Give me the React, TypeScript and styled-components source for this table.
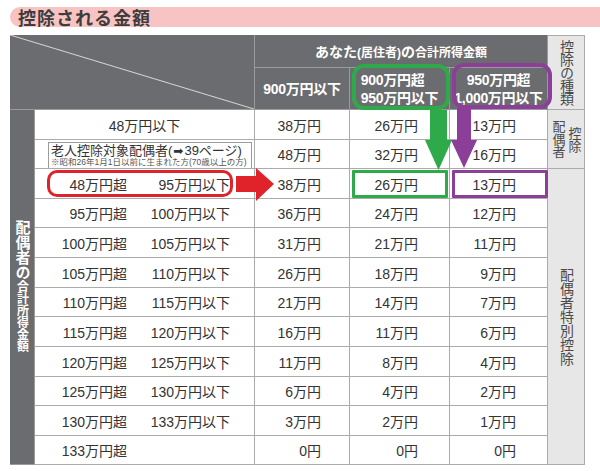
import React from "react";
import styled, { createGlobalStyle, css } from "styled-components";

const GlobalStyle = createGlobalStyle`
  html, body { margin: 0; padding: 0; background: #ffffff; }
  body {
    font-family: "Liberation Sans", "Noto Sans CJK JP", "DejaVu Sans", sans-serif;
    color: #333333;
  }
`;

const DARK = "#6b6c6f";
const LINE = "#ababab";
const LIGHT = "#e7e7e7";

const Page = styled.div`
  width: 600px;
  height: 471px;
  overflow: hidden;
  box-sizing: border-box;
  padding: 7px 0 0 10px;
  display: flex;
  flex-direction: column;
  gap: 8px;
`;

const TitleBar = styled.h1`
  margin: 0;
  height: 20px;
  background: #f8c3c3;
  border-radius: 10px 0 0 10px;
  display: flex;
  align-items: center;
  padding-left: 8px;
  font-family: "Noto Sans CJK JP", sans-serif;
  font-size: 18px;
  font-weight: 700;
  letter-spacing: 1px;
  line-height: 1;
  color: #3d3d3d;
`;

const TableWrap = styled.div`
  position: relative;
  width: 575px;
`;

const Grid = styled.div`
  display: grid;
  grid-template-columns: 25px 220px 95px 100px 98px 37px;
  grid-template-rows: 33px 42px 30px 29px 30px 29px 30px 30px 29px 30px 30px 29px 30px 29px;
`;

const cellBase = css`
  box-sizing: border-box;
  border-right: 1px solid ${LINE};
  border-bottom: 1px solid ${LINE};
  display: flex;
  align-items: center;
  min-width: 0;
`;

const DiagonalCell = styled.div`
  ${cellBase};
  grid-column: 1 / 3;
  grid-row: 1 / 3;
  background: ${DARK};
  border-color: #9a9a9a;
  position: relative;
`;

const DiagonalSvg = styled.svg`
  position: absolute;
  inset: 0;
  width: 100%;
  height: 100%;
`;

const IncomeHead = styled.div`
  ${cellBase};
  grid-column: 3 / 6;
  background: ${DARK};
  border-color: #9a9a9a;
  justify-content: center;
  color: #ffffff;
  font-weight: 700;
  white-space: nowrap;
`;

const Big = styled.span`
  font-size: 14px;
`;

const Small = styled.span`
  font-size: 12px;
`;

const BracketHead = styled.div<{ $align: "left" | "center" }>`
  ${cellBase};
  background: ${DARK};
  border-color: #9a9a9a;
  justify-content: center;
  color: #ffffff;
  font-weight: 700;
  font-size: 14px;
  line-height: 18px;
  letter-spacing: -0.3px;
  text-align: ${(p) => p.$align};
  white-space: nowrap;
`;

const KindHead = styled.div`
  ${cellBase};
  grid-column: 6;
  grid-row: 1 / 3;
  background: ${LIGHT};
  border-top: 1px solid ${LINE};
  justify-content: center;
  color: #4a4a4a;
`;

const Vertical = styled.span<{ $size: number; $spacing?: number; $bold?: boolean }>`
  writing-mode: vertical-rl;
  text-orientation: upright;
  font-size: ${(p) => p.$size}px;
  letter-spacing: ${(p) => p.$spacing ?? 0}px;
  line-height: 1;
  font-weight: ${(p) => (p.$bold ? 700 : 400)};
  white-space: nowrap;
`;

const LeftBand = styled.div`
  ${cellBase};
  grid-column: 1;
  grid-row: 3 / 15;
  background: ${DARK};
  border-color: #9a9a9a;
  justify-content: center;
  color: #ffffff;
  padding-bottom: 2px;
`;

const LabelCell = styled.div<{ $center?: boolean }>`
  ${cellBase};
  justify-content: ${(p) => (p.$center ? "center" : "flex-start")};
  font-size: 14px;
  color: #333333;
  white-space: nowrap;
`;

const Range = styled.div`
  display: grid;
  grid-template-columns: 92px 103px;
  text-align: right;
`;

const NoteCell = styled.div`
  ${cellBase};
  align-items: stretch;
  padding: 2px 2px 0 13px;
`;

const NoteBox = styled.div`
  flex: 1;
  border: 1px solid #9c9c9c;
  border-bottom: none;
  display: flex;
  flex-direction: column;
  justify-content: flex-start;
  padding-left: 2px;
  white-space: nowrap;
  overflow: hidden;
`;

const NoteMain = styled.div`
  font-size: 13px;
  line-height: 15px;
  height: 15px;
  color: #333333;
`;

const Arrow = styled.span`
  font-family: "DejaVu Sans", sans-serif;
  font-size: 12px;
  line-height: 1;
  margin: 0 1px;
`;

const NoteSub = styled.div`
  font-size: 8.5px;
  line-height: 9px;
  height: 9px;
  color: #555555;
`;

const ValueCell = styled.div<{ $pad: number }>`
  ${cellBase};
  justify-content: flex-end;
  padding-right: ${(p) => p.$pad}px;
  font-size: 14px;
  color: #333333;
  white-space: nowrap;
`;

const SideCell = styled.div<{ $rows: string }>`
  ${cellBase};
  grid-column: 6;
  grid-row: ${(p) => p.$rows};
  background: ${LIGHT};
  justify-content: center;
  gap: 3px;
  color: #4a4a4a;
`;

const Frame = styled.div<{ $x: number; $y: number; $w: number; $h: number; $color: string; $t: number; $r: number }>`
  position: absolute;
  left: ${(p) => p.$x}px;
  top: ${(p) => p.$y}px;
  width: ${(p) => p.$w}px;
  height: ${(p) => p.$h}px;
  box-sizing: border-box;
  border: ${(p) => p.$t}px solid ${(p) => p.$color};
  border-radius: ${(p) => p.$r}px;
  pointer-events: none;
`;

const ArrowLayer = styled.svg`
  position: absolute;
  left: 0;
  top: 0;
  pointer-events: none;
  overflow: visible;
`;

type Row = { from: string; to?: string; v: [string, string, string] };

const rows: Row[] = [
  { from: "48万円超", to: "95万円以下", v: ["38万円", "26万円", "13万円"] },
  { from: "95万円超", to: "100万円以下", v: ["36万円", "24万円", "12万円"] },
  { from: "100万円超", to: "105万円以下", v: ["31万円", "21万円", "11万円"] },
  { from: "105万円超", to: "110万円以下", v: ["26万円", "18万円", "9万円"] },
  { from: "110万円超", to: "115万円以下", v: ["21万円", "14万円", "7万円"] },
  { from: "115万円超", to: "120万円以下", v: ["16万円", "11万円", "6万円"] },
  { from: "120万円超", to: "125万円以下", v: ["11万円", "8万円", "4万円"] },
  { from: "125万円超", to: "130万円以下", v: ["6万円", "4万円", "2万円"] },
  { from: "130万円超", to: "133万円以下", v: ["3万円", "2万円", "1万円"] },
  { from: "133万円超", v: ["0円", "0円", "0円"] },
];

const PADS = [28, 31, 31];

const Values: React.FC<{ v: [string, string, string] }> = ({ v }) => (
  <>
    {v.map((t, i) => (
      <ValueCell key={i} $pad={PADS[i]}>
        {t}
      </ValueCell>
    ))}
  </>
);

export default function App() {
  return (
    <>
      <GlobalStyle />
      <Page>
        <TitleBar>控除される金額</TitleBar>
        <TableWrap>
          <Grid>
            <DiagonalCell>
              <DiagonalSvg viewBox="0 0 245 75" preserveAspectRatio="none">
                <line x1="0" y1="0" x2="245" y2="75" stroke="#d6d6d6" strokeWidth="1" vectorEffect="non-scaling-stroke" />
              </DiagonalSvg>
            </DiagonalCell>
            <IncomeHead>
              <Big>あなた</Big>
              <Small>(居住者)</Small>
              <Big>の</Big>
              <Small>合計所得金額</Small>
            </IncomeHead>
            <KindHead>
              <Vertical $size={14} $spacing={-1}>控除の種類</Vertical>
            </KindHead>
            <BracketHead $align="center">900万円以下</BracketHead>
            <BracketHead $align="left">
              900万円超
              <br />
              950万円以下
            </BracketHead>
            <BracketHead $align="center">
              950万円超
              <br />
              1,000万円以下
            </BracketHead>

            <LeftBand>
              <Vertical $size={15} $bold>
                配偶者の<Small>合計所得金額</Small>
              </Vertical>
            </LeftBand>

            <LabelCell $center>48万円以下</LabelCell>
            <Values v={["38万円", "26万円", "13万円"]} />
            <SideCell $rows="3 / 5">
              <Vertical $size={13} $spacing={-0.5}>配偶者</Vertical>
              <Vertical $size={13} $spacing={-0.5}>控除</Vertical>
            </SideCell>

            <NoteCell>
              <NoteBox>
                <NoteMain>
                  老人控除対象配偶者(<Arrow>➡</Arrow>39ページ)
                </NoteMain>
                <NoteSub>※昭和26年1月1日以前に生まれた方(70歳以上の方)</NoteSub>
              </NoteBox>
            </NoteCell>
            <Values v={["48万円", "32万円", "16万円"]} />

            {rows.map((r, i) => (
              <React.Fragment key={r.from}>
                <LabelCell>
                  <Range>
                    <span>{r.from}</span>
                    <span>{r.to ?? ""}</span>
                  </Range>
                </LabelCell>
                <Values v={r.v} />
                {i === 0 && (
                  <SideCell $rows="5 / 15">
                    <Vertical $size={14}>配偶者特別控除</Vertical>
                  </SideCell>
                )}
              </React.Fragment>
            ))}
          </Grid>

          <Frame $x={37} $y={135} $w={186} $h={27} $color="#e0232b" $t={3} $r={10} />
          <Frame $x={342} $y={29} $w={98} $h={46} $color="#2eaa4a" $t={4} $r={12} />
          <Frame $x={342} $y={135} $w={96} $h={28} $color="#2eaa4a" $t={3} $r={1} />
          <Frame $x={442} $y={28} $w={100} $h={46} $color="#8c3f98" $t={4} $r={12} />
          <Frame $x={442} $y={135} $w={96} $h={28} $color="#8c3f98" $t={3} $r={1} />

          <ArrowLayer width="575" height="430">
            <polygon points="226,141 246,141 246,133 264,149 246,166 246,157 226,157" fill="#e0232b" />
            <polygon points="420,75 437,75 437,105 442,105 428.5,135 415,105 420,105" fill="#2eaa4a" />
            <polygon points="447,73 461,73 461,105 467,105 454,133 441,105 447,105" fill="#8c3f98" />
          </ArrowLayer>
        </TableWrap>
      </Page>
    </>
  );
}
